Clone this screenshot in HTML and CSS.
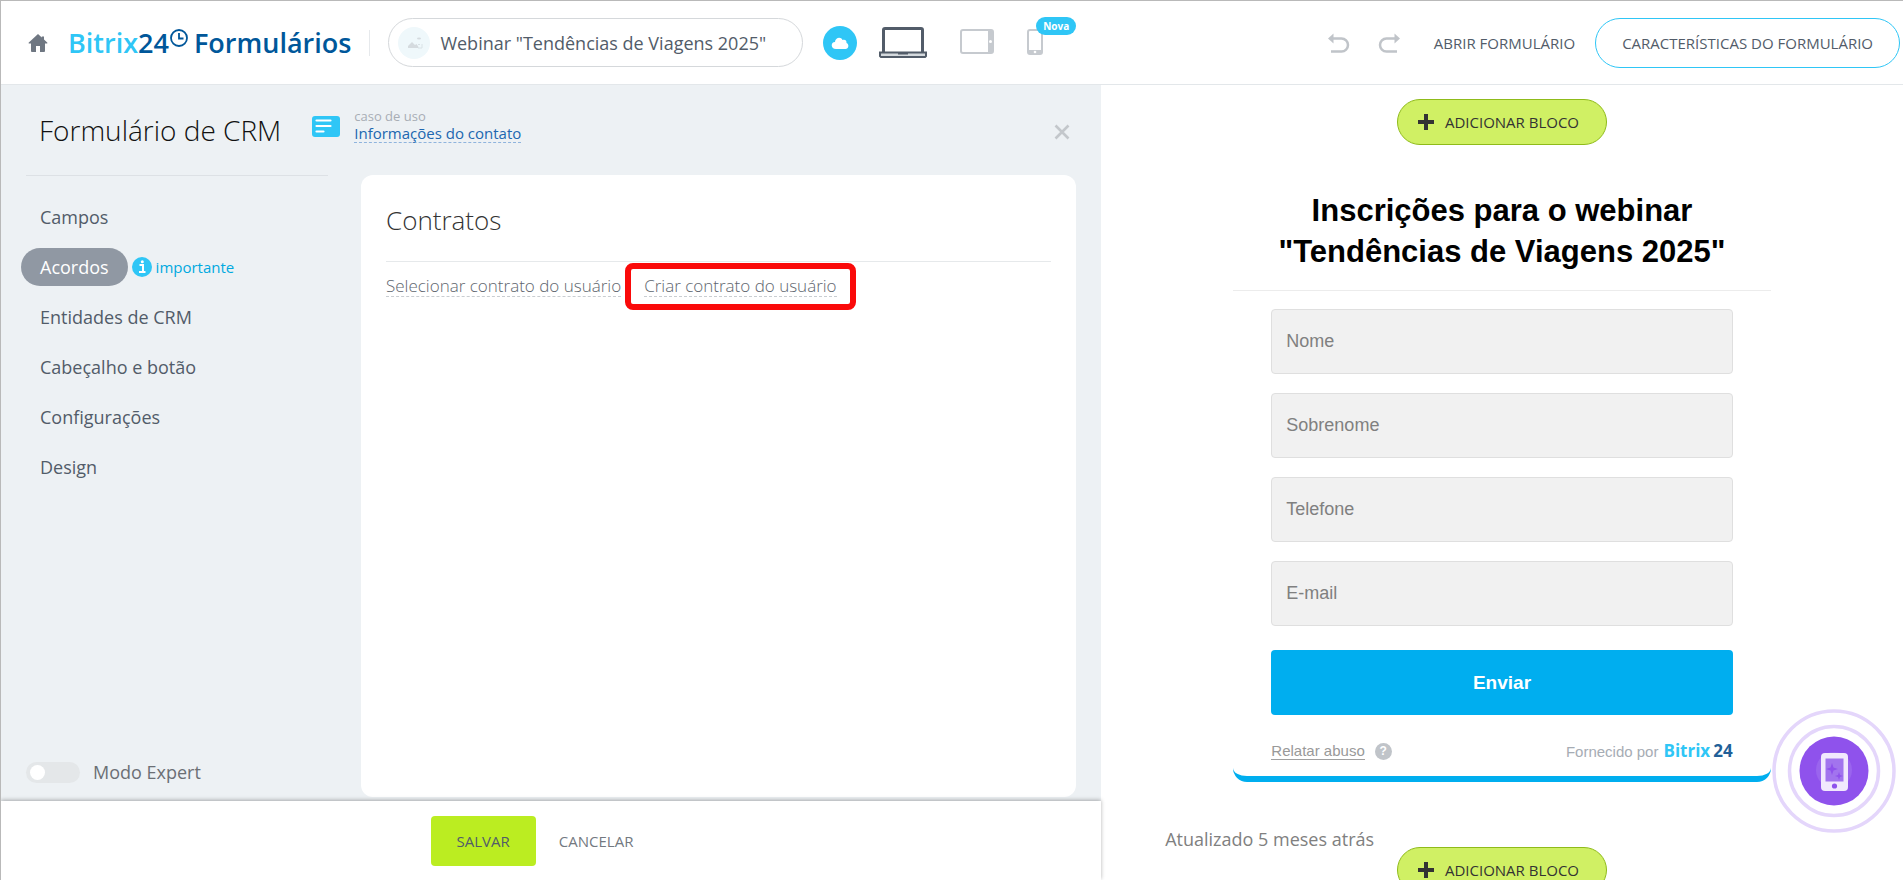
FILE: index.html
```html
<!DOCTYPE html>
<html lang="pt-BR">
<head>
<meta charset="utf-8">
<meta name="viewport" content="width=device-width, initial-scale=1">
<title>Bitrix24 Formulários</title>
<link rel="stylesheet" href="styles.css">
</head>
<body>
<div class="app">
  <header class="topbar">
    <a class="home" href="#" aria-label="Início">
      <svg width="20" height="20" viewBox="0 0 20 20" fill="#6f7782"><path d="M10 1 0.8 9.6c-.4.5-.2 1 .4 1H3v7.4c0 .6.3 1 .9 1h4.1v-6h4v6h4.100c.6 0 .9-.4.9-1v-7.400h1.800c.6 0 .8-.5.4-1L16 6.400V3.600h-2.200v.9z"/></svg>
    </a>
    <a class="brand" href="#"><span class="brand-light">Bitrix</span><span>24</span><svg class="brand-clock" width="20" height="20" viewBox="0 0 20 20" fill="none" stroke="#00579a"><circle cx="10" cy="10" r="8" stroke-width="1.800"/><path d="M10 5v5.500h4.500" stroke-width="1.800"/></svg><span>Formulários</span></a>
    <span class="divider"></span>
    <button class="site-name" type="button">
      <svg width="32" height="32" viewBox="0 0 32 32"><circle cx="16" cy="16" r="16" fill="#eff8fb"/><path d="M10 21v-2l4-4 3 3 1.500-1 2 3v1z" fill="#d5dbdf"/><path d="M20 17.500h2M24 17v4h-4" stroke="#d9e2e6" fill="none"/><ellipse cx="21" cy="11.500" rx="2" ry="1" fill="#d5dbdf"/></svg>
      <span>Webinar "Tendências de Viagens 2025"</span>
    </button>
    <div class="devices">
      <button class="icon-btn" type="button" aria-label="Salvo na nuvem">
        <svg width="34" height="34" viewBox="0 0 34 34"><circle cx="17" cy="17" r="17" fill="#2fc6f6"/><path d="M13 23c-5.500 0-5.500-7-1-7 0-4.500 6-6 7.500-2 3-1 4.300 1 4 3 3 1.200 2.200 6-1 6z" fill="#fff"/></svg>
      </button>
      <button class="icon-btn" type="button" aria-label="Computador">
        <svg width="48" height="31" viewBox="0 0 48 31"><rect x="4.500" y="1.500" width="39" height="25" rx="1.500" fill="#fff" stroke="#525c69" stroke-width="3"/><path d="M1 25.500h46v3.500l-1 1H2l-1-1z" fill="#d5dade" stroke="#525c69" stroke-width="2"/><path d="M19 26h10v1.500H19z" fill="#525c69"/></svg>
      </button>
      <button class="icon-btn" type="button" aria-label="Tablet">
        <svg width="34" height="28" viewBox="0 0 34 28"><rect x="1" y="1" width="32" height="23" rx="2" fill="#fff" stroke="#c6cacf" stroke-width="2"/><path d="M28 1h5v23h-5z" fill="#c6cacf"/><circle cx="30.500" cy="12.500" r="1.500" fill="#fff"/></svg>
      </button>
      <button class="icon-btn phone" type="button" aria-label="Celular">
        <svg width="16" height="28" viewBox="0 0 16 28"><rect x="1" y="1" width="14" height="24" rx="2" fill="#fff" stroke="#c6cacf" stroke-width="2"/><path d="M1 21h14v4H1z" fill="#c6cacf"/><circle cx="8" cy="23" r="1.300" fill="#fff"/></svg>
        <span class="badge">Nova</span>
      </button>
    </div>
    <div class="actions">
      <button class="icon-btn" type="button" aria-label="Desfazer">
        <svg width="22" height="22" viewBox="0 0 22 22"><path d="M4 6.500h9.500a6.500 6.500 0 0 1 0 13H3" fill="none" stroke="#c0c4c9" stroke-width="2.500"/><path d="M0 6.500 5.500 1.500v10z" fill="#c0c4c9"/></svg>
      </button>
      <button class="icon-btn" type="button" aria-label="Refazer">
        <svg width="22" height="22" viewBox="0 0 22 22"><path d="M18 6.500H8.500a6.500 6.500 0 0 0 0 13H19" fill="none" stroke="#c0c4c9" stroke-width="2.500"/><path d="M22 6.500 16.500 1.500v10z" fill="#c0c4c9"/></svg>
      </button>
      <a class="open-link" href="#">ABRIR FORMULÁRIO</a>
      <button class="features" type="button">CARACTERÍSTICAS DO FORMULÁRIO</button>
    </div>
  </header>

  <main class="workspace">
    <section class="settings">
      <header class="settings-head">
        <h1>Formulário de CRM</h1>
        <svg class="case-icon" width="28" height="21" viewBox="0 0 28 21"><rect width="28" height="21" rx="3" fill="#2fc6f6"/><path d="M4.500 4.500h14M4.500 10h14M4.500 15.500h7" stroke="#fff" stroke-width="2.200" stroke-linecap="round"/></svg>
        <div class="case">
          <span class="case-label">caso de uso</span>
          <a class="case-link" href="#">Informações do contato</a>
        </div>
        <button class="close" type="button" aria-label="Fechar">
          <svg width="16" height="16" viewBox="0 0 16 16"><path d="M1.500 1.500l13 13M14.500 1.500l-13 13" stroke="#c3c7cb" stroke-width="2.600"/></svg>
        </button>
      </header>
      <div class="settings-body">
        <aside class="sidebar">
          <nav class="menu">
            <a class="menu-item" href="#"><span class="menu-text">Campos</span></a>
            <a class="menu-item" href="#"><span class="menu-text active">Acordos</span>
              <svg width="20" height="20" viewBox="0 0 20 20"><circle cx="10" cy="10" r="10" fill="#2fc6f6"/><path d="M7.500 8h3.500v6.500M7 15h6.500" stroke="#fff" stroke-width="2" fill="none"/><circle cx="10.300" cy="4.800" r="1.500" fill="#fff"/></svg>
              <span class="note">importante</span></a>
            <a class="menu-item" href="#"><span class="menu-text">Entidades de CRM</span></a>
            <a class="menu-item" href="#"><span class="menu-text">Cabeçalho e botão</span></a>
            <a class="menu-item" href="#"><span class="menu-text">Configurações</span></a>
            <a class="menu-item" href="#"><span class="menu-text">Design</span></a>
          </nav>
          <label class="expert"><input class="switch" type="checkbox"><span>Modo Expert</span></label>
        </aside>
        <section class="card">
          <h2>Contratos</h2>
          <div class="card-links">
            <a href="#">Selecionar contrato do usuário</a>
            <span class="highlight"><a href="#">Criar contrato do usuário</a></span>
          </div>
        </section>
      </div>
      <footer class="settings-foot">
        <button class="save" type="button">SALVAR</button>
        <button class="cancel" type="button">CANCELAR</button>
      </footer>
    </section>

    <section class="preview">
      <button class="add-block" type="button"><svg width="16" height="16" viewBox="0 0 16 16"><path d="M8 0v16M0 8h16" stroke="#333" stroke-width="4"/></svg>ADICIONAR BLOCO</button>
      <form class="form">
        <h2 class="form-title">Inscrições para o webinar<br>"Tendências de Viagens 2025"</h2>
        <div class="fields">
          <input type="text" placeholder="Nome" aria-label="Nome">
          <input type="text" placeholder="Sobrenome" aria-label="Sobrenome">
          <input type="tel" placeholder="Telefone" aria-label="Telefone">
          <input type="email" placeholder="E-mail" aria-label="E-mail">
        </div>
        <button class="send" type="button">Enviar</button>
        <div class="form-foot">
          <a class="abuse" href="#">Relatar abuso</a>
          <span class="help">?</span>
          <span class="powered">Fornecido por</span>
          <span class="powered-brand"><b class="pb-light">Bitrix</b><b class="pb-dark">24</b></span>
        </div>
      </form>
      <p class="updated">Atualizado 5 meses atrás</p>
      <button class="add-block" type="button"><svg width="16" height="16" viewBox="0 0 16 16"><path d="M8 0v16M0 8h16" stroke="#333" stroke-width="4"/></svg>ADICIONAR BLOCO</button>
      <button class="fab" type="button" aria-label="Abrir no celular">
        <svg width="124" height="124" viewBox="0 0 124 124"><circle cx="62" cy="62" r="60" fill="none" stroke="#e4d6fb" stroke-width="3.500"/><circle cx="62" cy="62" r="44.500" fill="none" stroke="#e4d6fb" stroke-width="3.500"/><circle cx="62" cy="62" r="34.500" fill="#8f52ec"/><circle cx="62" cy="61" r="18" fill="#9a64ee"/><rect x="49" y="44" width="27" height="38" rx="4" fill="#f1e8fd"/><rect x="53.500" y="49.500" width="18" height="23" fill="#a274ee"/><path d="M60 54l1.500 4.500 4.500 1.500-4.500 1.500-1.500 4.500-1.500-4.500-4.500-1.500 4.500-1.500zM67 63l1 3 3 1-3 1-1 3-1-3-3-1 3-1z" fill="#8f52ec"/><circle cx="62.500" cy="77" r="2.600" fill="#8f52ec"/></svg>
      </button>
    </section>
  </main>
</div>
</body>
</html>
```
FILE: styles.css
```css
* { box-sizing: border-box; }

body {
  margin: 0;
  font-family: "Open Sans", "Noto Sans", sans-serif;
  font-size: 17px;
  color: #525c69;
  background: #fff;
}

a { color: inherit; text-decoration: none; }
h1, h2, p { margin: 0; font-weight: 300; }
svg { display: block; flex: none; }

button {
  padding: 0;
  border: 0;
  background: none;
  font-family: inherit;
  color: inherit;
  cursor: pointer;
  white-space: nowrap;
}

.app {
  display: flex;
  flex-direction: column;
  height: 100vh;
  overflow: hidden;
  border-top: 1px solid #b9b9b9;
  border-left: 1px solid #b9b9b9;
}

/* Top bar */
.topbar {
  display: flex;
  align-items: center;
  flex: none;
  height: 84px;
  padding: 0 3px 0 27px;
  border-bottom: 1px solid #e3e7ea;
}

.brand {
  display: flex;
  align-items: center;
  margin-left: 20px;
  font-size: 27px;
  font-weight: 600;
  color: #00579a;
  white-space: nowrap;
}

.brand-light { color: #2fc6f6; }

.brand-clock {
  align-self: flex-start;
  margin: 4px 5px 0 0;
}

.divider {
  width: 1px;
  height: 26px;
  margin: 0 18px;
  background: #e6e9ec;
}

.site-name {
  display: flex;
  align-items: center;
  gap: 10px;
  height: 49px;
  padding: 0 36px 0 9px;
  border: 1px solid #d5d8db;
  border-radius: 25px;
  font-size: 18px;
}

.devices {
  display: flex;
  align-items: center;
  margin-left: 20px;
}

.devices .icon-btn + .icon-btn { margin-left: 22px; }
.devices .icon-btn + .icon-btn ~ .icon-btn { margin-left: 33px; }

.phone { position: relative; }

.badge {
  position: absolute;
  left: 9px;
  top: -12px;
  padding: 0 7px;
  border-radius: 9px;
  background: #2fc6f6;
  color: #fff;
  font-size: 10px;
  font-weight: 700;
  line-height: 18px;
}

.actions {
  display: flex;
  align-items: center;
  gap: 28px;
  margin-left: auto;
  font-size: 15px;
  white-space: nowrap;
}

.open-link { margin-left: 6px; font-weight: 500; }

.features {
  height: 50px;
  margin-left: -8px;
  padding: 0 26px;
  border: 1px solid #2fc6f6;
  border-radius: 25px;
  font-size: 15px;
  font-weight: 500;
}

/* Workspace */
.workspace {
  display: grid;
  grid-template-columns: minmax(0, 1100fr) minmax(0, 802fr);
  flex: 1;
  min-height: 0;
}

.settings {
  display: flex;
  flex-direction: column;
  min-height: 0;
  background: #edf1f4;
}

.settings-head {
  display: flex;
  align-items: center;
  flex: none;
  height: 90px;
  padding: 0 31px 0 38px;
  white-space: nowrap;
}

h1 { font-size: 28px; color: #111; }
.case-icon { margin: 0 14px 8px 31px; }

.case {
  display: flex;
  flex-direction: column;
  align-items: flex-start;
  padding-bottom: 9px;
}

.case-label { font-size: 13px; line-height: 16px; color: #a8adb4; }

.case-link {
  border-bottom: 1px dashed #8fb4dd;
  font-size: 15px;
  line-height: 18px;
  color: #2067b0;
}

.close { margin-left: auto; padding-top: 4px; }

.settings-body {
  display: grid;
  grid-template-columns: 335px minmax(0, 1fr);
  gap: 25px;
  flex: 1;
  min-height: 0;
  padding-right: 25px;
}

.sidebar {
  display: flex;
  flex-direction: column;
  justify-content: space-between;
  padding: 0 0 17px 20px;
  font-size: 18px;
}

.menu {
  display: flex;
  flex-direction: column;
  gap: 12px;
  margin-right: -13px;
  padding-top: 23px;
}

.menu::before {
  content: "";
  height: 1px;
  margin: -23px 21px 10px 5px;
  background: #dde1e5;
}

.menu-item { display: flex; align-items: center; gap: 4px; }

.menu-text {
  padding: 0 19px;
  border-radius: 19px;
  line-height: 38px;
}

.active { background: #9098a3; color: #fff; }
.note { font-size: 15px; color: #00a9e0; }

.expert {
  display: flex;
  align-items: center;
  gap: 13px;
  padding-left: 5px;
  color: #6b6f75;
}

.switch {
  display: flex;
  align-items: center;
  appearance: none;
  width: 54px;
  height: 21px;
  margin: 0;
  padding: 0 4px;
  border-radius: 11px;
  background: #e4e7e9;
}

.switch::before {
  content: "";
  width: 15px;
  height: 15px;
  border-radius: 50%;
  background: #fff;
}

.card {
  margin-bottom: 4px;
  padding: 0 25px;
  border-radius: 12px;
  background: #fff;
}

.card h2 {
  padding: 26px 0 22px;
  border-bottom: 1px solid #e6e9eb;
  font-size: 26px;
  line-height: 38px;
  color: #333;
}

.card-links {
  display: flex;
  align-items: flex-start;
  gap: 4px;
  padding-top: 1px;
  font-weight: 300;
  color: #60666e;
  white-space: nowrap;
}

.card-links a {
  border-bottom: 1px dashed #c9cdd1;
  line-height: 20px;
}

.card-links > a { margin-top: 13px; }

.highlight {
  padding: 7px 13px 7px;
  border: 6px solid #fa0a0a;
  border-radius: 8px;
}

.highlight a { display: block; }

.settings-foot {
  display: flex;
  align-items: center;
  justify-content: center;
  gap: 23px;
  flex: none;
  height: 79px;
  padding-right: 38px;
  background: #fff;
  box-shadow: 0 -1px 4px rgba(0, 0, 0, 0.3);
}

.save {
  height: 50px;
  padding: 0 26px;
  border-radius: 4px;
  background: #bbed21;
  font-size: 15px;
  font-weight: 500;
}

.cancel { font-size: 15px; font-weight: 500; color: #737981; }

/* Preview */
.preview {
  position: relative;
  display: flex;
  flex-direction: column;
  align-items: center;
  min-height: 0;
  padding-top: 14px;
}

.add-block {
  display: flex;
  align-items: center;
  gap: 11px;
  flex: none;
  height: 46px;
  padding: 0 27px 0 20px;
  border: 1px solid #8fbb1a;
  border-radius: 23px;
  background: #d0f064;
  color: #333;
  font-size: 15px;
  font-weight: 500;
}

.form {
  display: flex;
  flex-direction: column;
  flex: none;
  width: 67%;
  margin-top: 45px;
  padding: 0 38px 15px;
  border-bottom: 6px solid #00aeef;
  border-radius: 14px;
  font-family: "Liberation Sans", Arial, sans-serif;
}

.form-title {
  margin: 0 -38px 18px;
  padding-bottom: 18px;
  border-bottom: 1px solid #ececec;
  font-size: 31px;
  font-weight: 700;
  line-height: 41px;
  text-align: center;
  color: #000;
}

.fields { display: flex; flex-direction: column; gap: 19px; }

.fields input {
  width: 100%;
  height: 65px;
  padding: 0 14px;
  border: 1px solid #dfdfdf;
  border-radius: 4px;
  background: #f1f1f1;
  font-family: inherit;
  font-size: 18px;
}

.fields input::placeholder { color: #808080; }

.send {
  height: 65px;
  margin-top: 24px;
  border-radius: 4px;
  background: #00aeef;
  color: #fff;
  font-size: 19px;
  font-weight: 700;
}

.form-foot {
  display: flex;
  align-items: center;
  margin-top: 26px;
  font-size: 15px;
  color: #a6acb4;
}

.abuse { border-bottom: 1px solid #a0a0a0; color: #999; }

.help {
  width: 17px;
  margin-left: 10px;
  border-radius: 50%;
  background: #c0c4c9;
  color: #fff;
  font-size: 12px;
  font-weight: 700;
  line-height: 17px;
  text-align: center;
}

.powered { margin-left: auto; }

.powered-brand {
  display: flex;
  gap: 3px;
  margin-left: 5px;
  font-family: "Open Sans", sans-serif;
  font-size: 17px;
  line-height: 20px;
}

.pb-light { color: #2fc6f6; }
.pb-dark { color: #215f98; }

.updated {
  align-self: flex-start;
  margin: 49px 0 0 8%;
  font-size: 18px;
  font-weight: 400;
  line-height: 16px;
  color: #808080;
}

.fab {
  position: absolute;
  right: 7px;
  bottom: 47px;
}
```
